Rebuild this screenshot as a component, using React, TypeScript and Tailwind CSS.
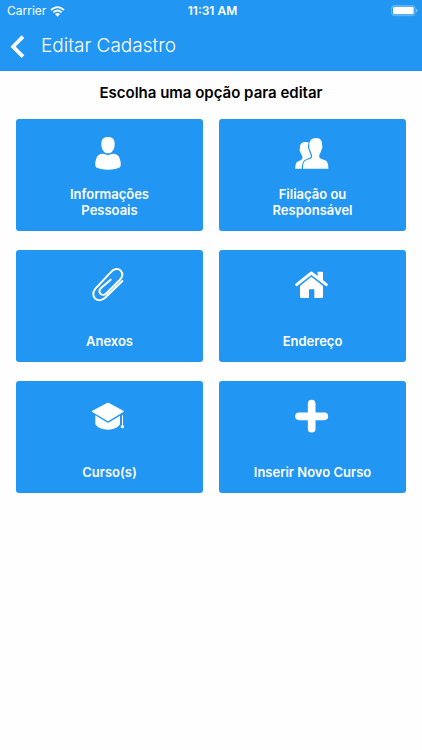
import type { ReactNode } from 'react';

interface MenuOption {
  name: string;
  icon: ReactNode;
}

const iconClass = 'w-10 h-10 shrink-0';

function PersonIcon() {
  return (
    <svg className={iconClass} viewBox="30 24 120 120" fill="currentColor" aria-hidden="true">
      <path d="M84 36C98 36 104 43 104 56C104 72 97 85 84 85C71 85 64 72 64 56C64 43 70 36 84 36Z" />
      <path d="M62 87Q70 85 75 88Q84 93 93 88Q98 85 106 87Q119 90 122 112Q124 123 120 127Q108 134 84 134Q60 134 48 127Q44 123 46 112Q49 90 62 87Z" />
    </svg>
  );
}

function PeopleIcon() {
  return (
    <svg className={iconClass} viewBox="32 24 120 120" fill="currentColor" aria-hidden="true">
      <path d="M101 39C113 39 119 45 119 58L120 63C121 70 118 72 117 76C116 82 113 85 111 89C110 97 112 99 116 101L128 106C136 109 138 118 138 131H62C62 118 64 109 72 106L84 101C89 98 90 96 89 89C86 85 85 81 84 76C81 72 80 68 81 62C80 50 85 39 101 39Z" />
      <path d="M70 51C75 51 78 52 79 54C77 60 76 67 78 71C80 78 82 83 85 89C86 94 85 96 82 98C75 102 69 103 66 106C60 111 59 120 58 131H39C39 118 41 112 48 109L55 106C60 103 61 100 60 93C57 89 55 86 54 81C52 78 51 73 53 70C52 58 57 51 70 51Z" />
    </svg>
  );
}

function ClipIcon() {
  return (
    <svg
      className={iconClass}
      viewBox="30 18 120 120"
      fill="none"
      stroke="currentColor"
      strokeWidth="6"
      strokeLinecap="round"
      aria-hidden="true"
    >
      <path d="M127 69L77 118C67 128 54 129 46 122C37 114 38 101 47 91L92 43C101 31 115 30 122 38C129 46 128 57 119 66L80 105C75 111 67 112 61 107C57 102 58 95 63 90L92 65" />
    </svg>
  );
}

function HomeIcon() {
  return (
    <svg className={iconClass} viewBox="32 18 120 120" fill="currentColor" aria-hidden="true">
      <path d="M108 41H120Q122 41 122 43V71L106 58V43Q106 41 108 41Z" />
      <path
        d="M43 80L87 45L132 80"
        fill="none"
        stroke="currentColor"
        strokeWidth="9"
        strokeLinecap="round"
        strokeLinejoin="round"
      />
      <path d="M53 84L87 56L122 84V116Q122 120 118 120H96V94H80V120H57Q53 120 53 116Z" />
    </svg>
  );
}

function SchoolIcon() {
  return (
    <svg className={iconClass} viewBox="30 21 120 120" fill="currentColor" aria-hidden="true">
      <path d="M81 45Q84 43 87 45L130 68Q133 70 130 72L87 98Q84 100 81 98L37 72Q34 70 37 68Z" />
      <path d="M46 82L79 102Q84 105 89 102L120 83V109Q109 125 84 125Q57 125 46 109Z" />
      <path d="M126 81H129V111Q132 113 132 116Q132 121 127 121Q122 121 122 116Q122 113 126 111Z" />
    </svg>
  );
}

function PlusIcon() {
  return (
    <svg
      className={iconClass}
      viewBox="32 21 120 120"
      fill="none"
      stroke="currentColor"
      strokeWidth="23"
      strokeLinecap="round"
      aria-hidden="true"
    >
      <path d="M88 47V122M50 85H126" />
    </svg>
  );
}

const options: MenuOption[] = [
  { name: 'Informações Pessoais', icon: <PersonIcon /> },
  { name: 'Filiação ou Responsável', icon: <PeopleIcon /> },
  { name: 'Anexos', icon: <ClipIcon /> },
  { name: 'Endereço', icon: <HomeIcon /> },
  { name: 'Curso(s)', icon: <SchoolIcon /> },
  { name: 'Inserir Novo Curso', icon: <PlusIcon /> },
];

function StatusBar() {
  return (
    <div className="grid grid-cols-3 items-center h-[22px] pl-[7px] pr-1 text-xs">
      <div className="flex items-center gap-1">
        <span>Carrier</span>
        <svg className="w-[15px] h-[11px]" viewBox="0 0 45 33" fill="none" stroke="currentColor" aria-hidden="true">
          <path d="M3 12Q22.500 -5 42 12" strokeWidth="5.500" />
          <path d="M10 19Q22.500 8 35 19" strokeWidth="5.500" />
          <path d="M15 24Q22.500 18 30 24L22.500 32Z" fill="currentColor" stroke="none" />
        </svg>
      </div>
      <span className="text-center font-semibold">11:31 AM</span>
      <svg className="w-[27px] h-3 justify-self-end" viewBox="0 0 81 36" aria-hidden="true">
        <rect x="2" y="1" width="70" height="31" rx="8" fill="none" stroke="currentColor" strokeWidth="2" opacity="0.5" />
        <rect x="6" y="5" width="62" height="23" rx="4" fill="currentColor" />
        <path d="M75 11Q79 12 79 16.500Q79 21 75 22Z" fill="currentColor" opacity="0.5" />
      </svg>
    </div>
  );
}

export default function App() {
  return (
    <div className="min-h-screen bg-[#fefefe] font-['Inter',sans-serif]">
      <header className="bg-[#2196f3] text-white">
        <StatusBar />
        {/* Navigation bar */}
        <div className="flex items-center h-[49px] pl-2.5 gap-4">
          <button type="button" aria-label="Voltar">
            <svg className="w-[15px] h-6" viewBox="0 0 45 72" fill="none" stroke="currentColor" strokeWidth="11" aria-hidden="true">
              <path d="M39 5L9 35L39 65" />
            </svg>
          </button>
          <h1 className="text-[19px] font-light">Editar Cadastro</h1>
        </div>
      </header>

      <main className="px-4 pt-2.5">
        <h2 className="text-center text-[15px] leading-6 font-semibold text-black">
          Escolha uma opção para editar
        </h2>

        {/* Options */}
        <div className="grid grid-cols-2 gap-x-4 gap-y-[19px] mt-3.5">
          {options.map((option) => (
            <button
              key={option.name}
              type="button"
              className="flex flex-col items-center justify-between h-28 pt-3.5 pb-[13px] rounded-[3px] bg-[#2196f3] text-white"
            >
              {option.icon}
              <span className="max-w-32 text-[13px] leading-4 font-semibold">{option.name}</span>
            </button>
          ))}
        </div>
      </main>
    </div>
  );
}
